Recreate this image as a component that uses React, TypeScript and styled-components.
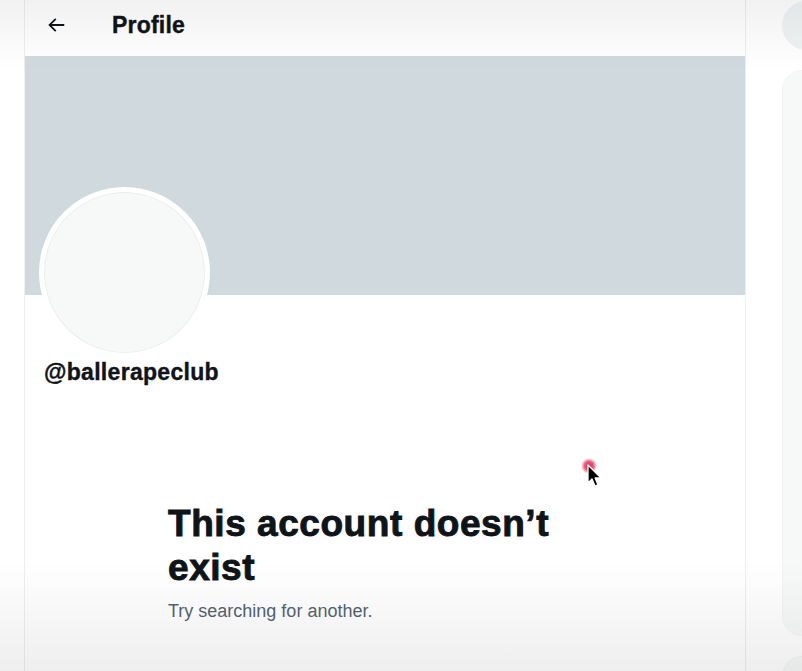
import React from "react";
import styled, { createGlobalStyle } from "styled-components";

const Global = createGlobalStyle`
  html, body { margin: 0; padding: 0; background: #ffffff; overflow: hidden; }
  body { font-family: "Liberation Sans", Arial, sans-serif; color: #0f1419; }
  * { box-sizing: border-box; }
`;

const Page = styled.div`
  position: relative;
  display: flex;
  align-items: flex-start;
  width: 802px;
  height: 671px;
  overflow: hidden;
`;

const Gutter = styled.div`
  width: 24px;
  flex: none;
`;

const Main = styled.main`
  width: 722px;
  flex: none;
  min-height: 671px;
  border-left: 1px solid #eceff1;
  border-right: 1px solid #eceff1;
  background: #ffffff;
`;

const Header = styled.header`
  height: 56px;
  display: flex;
  align-items: center;
  padding: 0 0 7px 14px;
`;

const BackButton = styled.button`
  width: 34px;
  height: 34px;
  border: none;
  background: transparent;
  padding: 0;
  display: flex;
  align-items: center;
  justify-content: center;
  color: #0f1419;
`;

const HeaderTitle = styled.h2`
  margin: 0 0 0 39px;
  font-size: 23px;
  line-height: 28px;
  font-weight: 700;
  letter-spacing: 0.2px;
  -webkit-text-stroke: 0.4px #0f1419;
`;

const Banner = styled.div`
  height: 239px;
  background: #cfd9de;
`;

const ProfileBody = styled.div`
  padding: 0 14px;
`;

const Avatar = styled.div`
  width: 171px;
  height: 171px;
  margin-top: -108px;
  border-radius: 50%;
  border: 5px solid #ffffff;
  background: #f7f9f9;
  box-shadow: inset 0 0 0 1px rgba(0, 0, 0, 0.05);
`;

const Handle = styled.div`
  margin-left: 5px;
  font-size: 23px;
  line-height: 28px;
  font-weight: 700;
  letter-spacing: 0.3px;
  -webkit-text-stroke: 0.4px #0f1419;
`;

const Empty = styled.div`
  max-width: 434px;
  margin: 116px auto 0;
`;

const EmptyTitle = styled.h1`
  margin: 0;
  font-size: 37px;
  line-height: 44px;
  font-weight: 700;
  letter-spacing: 0.55px;
  -webkit-text-stroke: 0.9px #0f1419;
`;

const EmptyText = styled.p`
  margin: 9px 0 0;
  font-size: 18px;
  line-height: 24px;
  color: #536471;
`;

const Side = styled.aside`
  width: 420px;
  flex: none;
  margin-left: 36px;
  display: flex;
  flex-direction: column;
  gap: 20px;
`;

const Search = styled.div`
  margin-top: 1px;
  height: 49px;
  border-radius: 25px;
  background: #eff3f4;
`;

const Panel = styled.div<{ $h: number }>`
  height: ${(p) => p.$h}px;
  border-radius: 20px;
  background: #f7f9f9;
  border: 1px solid #f2f4f5;
`;

const Vignette = styled.div<{ $top?: boolean }>`
  position: absolute;
  left: 0;
  right: 0;
  pointer-events: none;
  ${(p) =>
    p.$top
      ? `top: 0; height: 70px; background: linear-gradient(rgba(0,0,0,0.055), rgba(0,0,0,0));`
      : `bottom: 0; height: 110px; background: linear-gradient(rgba(0,0,0,0), rgba(0,0,0,0.065));`}
`;

const Cursor = styled.svg`
  position: absolute;
  left: 578px;
  top: 455px;
  pointer-events: none;
`;

export default function App() {
  return (
    <>
      <Global />
      <Page>
        <Gutter />
        <Main>
          <Header>
            <BackButton aria-label="Back">
              <svg width="22" height="22" viewBox="0 0 24 24" fill="currentColor">
                <path d="M7.414 13l5.043 5.04-1.414 1.42L3.586 12l7.457-7.46 1.414 1.42L7.414 11H21v2H7.414z" />
              </svg>
            </BackButton>
            <HeaderTitle>Profile</HeaderTitle>
          </Header>
          <Banner />
          <ProfileBody>
            <Avatar />
            <Handle>@ballerapeclub</Handle>
          </ProfileBody>
          <Empty>
            <EmptyTitle>This account doesn’t exist</EmptyTitle>
            <EmptyText>Try searching for another.</EmptyText>
          </Empty>
        </Main>
        <Side>
          <Search />
          <Panel $h={566} />
          <Panel $h={120} />
        </Side>
        <Vignette $top />
        <Vignette />
        <Cursor width="34" height="40" viewBox="0 0 34 40">
          <defs>
            <radialGradient id="halo">
              <stop offset="0%" stopColor="#e0224a" stopOpacity="0.95" />
              <stop offset="55%" stopColor="#e0224a" stopOpacity="0.75" />
              <stop offset="100%" stopColor="#e0224a" stopOpacity="0" />
            </radialGradient>
          </defs>
          <circle cx="11" cy="11" r="8" fill="url(#halo)" />
          <path
            d="M10 10 L10 28 L14 24 L17 31 L20 29.7 L17.1 23 L23 23 Z"
            fill="#000"
            stroke="#fff"
            strokeWidth="1.3"
            strokeLinejoin="round"
          />
        </Cursor>
      </Page>
    </>
  );
}
